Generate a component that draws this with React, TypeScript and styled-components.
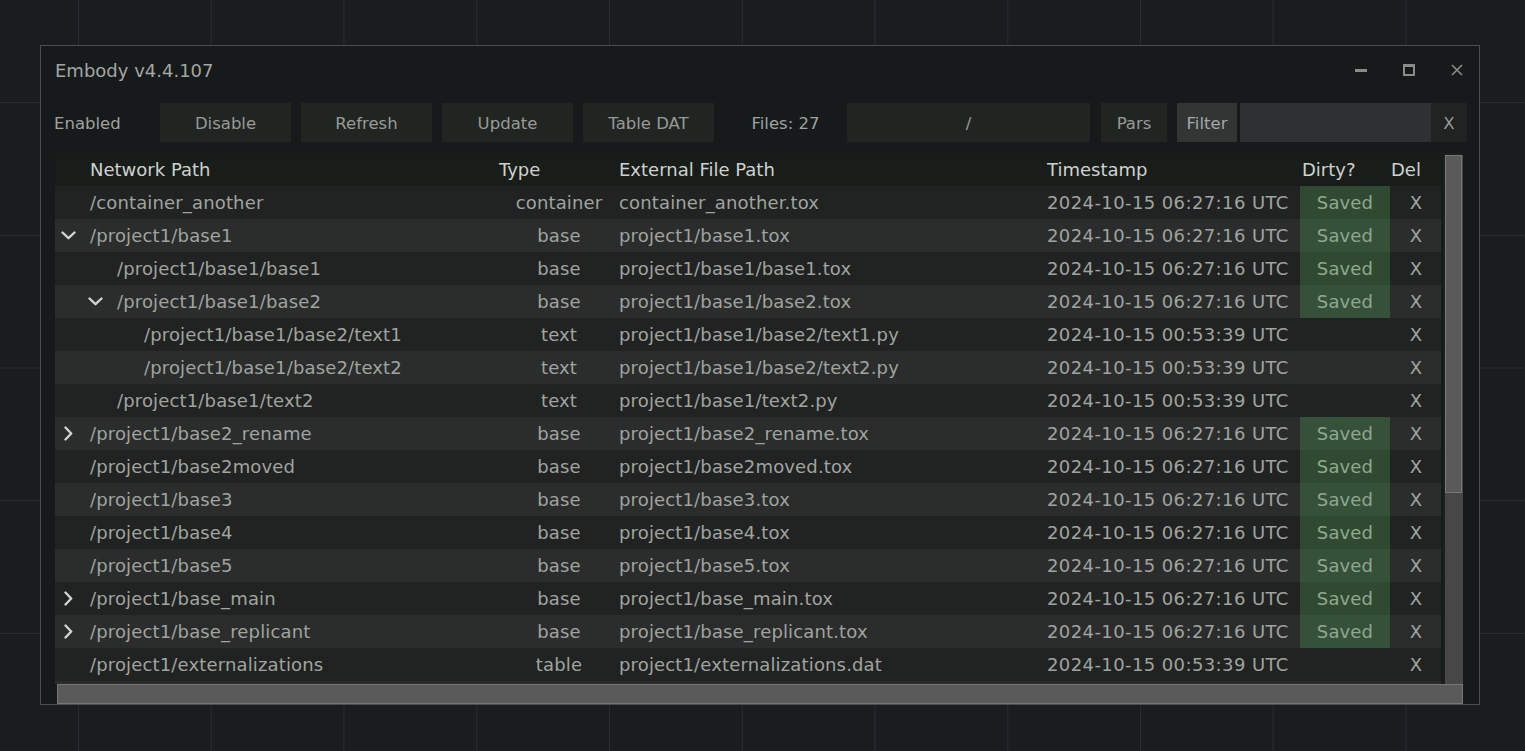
import React from "react";
import styled, { createGlobalStyle } from "styled-components";

const Global = createGlobalStyle`
  html, body { margin: 0; padding: 0; }
  body {
    width: 1525px;
    height: 751px;
    overflow: hidden;
    background-color: #1b1c20;
    background-image:
      linear-gradient(to right, #2a2b31 1px, transparent 1px),
      linear-gradient(to bottom, #2a2b31 1px, transparent 1px);
    background-size: 132.75px 132.75px;
    background-position: 78px 102px;
    font-family: "DejaVu Sans", Verdana, sans-serif;
  }
`;

const Stage = styled.div`
  padding: 45px 0 0 40px;
`;

const Window = styled.div`
  width: 1438px;
  height: 658px;
  border: 1px solid #4b4d50;
  background: #171a1a;
  display: flex;
  flex-direction: column;
`;

const TitleBar = styled.div`
  height: 48px;
  display: flex;
  align-items: center;
  padding-left: 14px;
  padding-right: 16px;
`;

const Title = styled.div`
  flex: 1;
  font-size: 18px;
  color: #a3a6a3;
`;

const WinButtons = styled.div`
  display: flex;
  align-items: center;
  gap: 36px;
  margin-top: -1px;
`;

const WinIcon = styled.svg`
  width: 12px;
  height: 12px;
  display: block;
`;

const Toolbar = styled.div`
  margin-top: 9px;
  height: 39px;
  display: flex;
  align-items: stretch;
  padding-left: 13px;
`;

const Label = styled.div<{ $w: number; $center?: boolean }>`
  width: ${(p) => p.$w}px;
  display: flex;
  align-items: center;
  justify-content: ${(p) => (p.$center ? "center" : "flex-start")};
  padding-top: 1px;
  padding-left: ${(p) => (p.$center ? 10 : 0)}px;
  box-sizing: border-box;
  font-size: 16.5px;
  color: #9fa29f;
  flex: none;
`;

const Btn = styled.div<{ $w: number; $gap?: number; $bg?: string; $fg?: string }>`
  width: ${(p) => p.$w}px;
  margin-left: ${(p) => p.$gap ?? 0}px;
  background: ${(p) => p.$bg ?? "#212522"};
  display: flex;
  align-items: center;
  justify-content: center;
  padding-top: 1px;
  font-size: 16.5px;
  color: ${(p) => p.$fg ?? "#979a97"};
  flex: none;
`;

const TableArea = styled.div`
  margin-top: 11px;
  height: 531px;
  display: flex;
  padding-left: 14px;
`;

const Table = styled.div`
  width: 1386px;
  height: 531px;
  overflow: hidden;
  background: #2a2d2b;
`;

const Row = styled.div<{ $kind: "head" | "dark" | "light" }>`
  height: 33px;
  display: flex;
  align-items: center;
  font-size: 18px;
  letter-spacing: ${(p) => (p.$kind === "head" ? "0" : "0.15px")};
  background: ${(p) =>
    p.$kind === "head" ? "#191d1a" : p.$kind === "dark" ? "#202321" : "#2a2d2b"};
  color: ${(p) => (p.$kind === "head" ? "#cfd1cf" : "#a0a3a0")};
  white-space: nowrap;
`;

const PathCell = styled.div<{ $level: number }>`
  width: 440px;
  height: 100%;
  display: flex;
  align-items: center;
  padding-left: ${(p) => 7 + p.$level * 27}px;
  box-sizing: border-box;
  flex: none;
`;

const ChevSlot = styled.div`
  width: 28px;
  height: 100%;
  display: flex;
  align-items: center;
  flex: none;
`;

const TypeCell = styled.div<{ $head?: boolean }>`
  width: 120px;
  padding-left: ${(p) => (p.$head ? 4 : 8)}px;
  box-sizing: border-box;
  text-align: ${(p) => (p.$head ? "left" : "center")};
  flex: none;
`;

const Cell = styled.div<{ $w: number; $spacing?: number }>`
  width: ${(p) => p.$w}px;
  padding-left: 4px;
  box-sizing: border-box;
  flex: none;
  ${(p) => (p.$spacing !== undefined ? `letter-spacing: ${p.$spacing}px;` : "")}
`;

const DirtyCell = styled.div<{ $saved?: boolean; $light?: boolean; $head?: boolean }>`
  width: 90px;
  height: 100%;
  display: flex;
  align-items: center;
  justify-content: ${(p) => (p.$head ? "flex-start" : "center")};
  padding-left: ${(p) => (p.$head ? 2 : 0)}px;
  box-sizing: border-box;
  flex: none;
  background: ${(p) => (p.$saved ? (p.$light ? "#35513a" : "#2f4a31") : "transparent")};
  color: ${(p) => (p.$saved ? "#8fa88f" : "inherit")};
`;

const DelCell = styled.div<{ $head?: boolean }>`
  width: 51px;
  padding-left: 1px;
  box-sizing: border-box;
  text-align: ${(p) => (p.$head ? "left" : "center")};
  flex: none;
`;

const VTrack = styled.div`
  margin-left: 2px;
  width: 20px;
  height: 531px;
  background: #464746;
  box-sizing: border-box;
  border-left: 2px solid #1c1f1f;
  border-top: 2px solid #1c1f1f;
  flex: none;
`;

const VThumb = styled.div`
  width: 17px;
  height: 338px;
  background: #5a5a5a;
  border: 1px solid #787878;
  box-sizing: border-box;
`;

const HBar = styled.div`
  margin-left: 16px;
  width: 1406px;
  height: 20px;
  background: #5a5a5a;
  border: 1px solid #767676;
  box-sizing: border-box;
`;

const ChevDown = () => (
  <svg width="15" height="9" viewBox="0 0 15 9" style={{ display: "block", marginLeft: -1 }}>
    <path d="M1.5 1.5 L7.5 7.2 L13.5 1.5" fill="none" stroke="#d2d4d2" strokeWidth="2.4" strokeLinecap="round" strokeLinejoin="round" />
  </svg>
);

const ChevRight = () => (
  <svg width="9" height="15" viewBox="0 0 9 15" style={{ display: "block", marginLeft: 2 }}>
    <path d="M1.5 1.5 L7.2 7.5 L1.5 13.5" fill="none" stroke="#d2d4d2" strokeWidth="2.4" strokeLinecap="round" strokeLinejoin="round" />
  </svg>
);

type Item = {
  path: string;
  type: string;
  file: string;
  time: string;
  saved: boolean;
  level: number;
  chev?: "down" | "right";
};

const T1 = "2024-10-15 06:27:16 UTC";
const T2 = "2024-10-15 00:53:39 UTC";

const rows: Item[] = [
  { path: "/container_another", type: "container", file: "container_another.tox", time: T1, saved: true, level: 0 },
  { path: "/project1/base1", type: "base", file: "project1/base1.tox", time: T1, saved: true, level: 0, chev: "down" },
  { path: "/project1/base1/base1", type: "base", file: "project1/base1/base1.tox", time: T1, saved: true, level: 1 },
  { path: "/project1/base1/base2", type: "base", file: "project1/base1/base2.tox", time: T1, saved: true, level: 1, chev: "down" },
  { path: "/project1/base1/base2/text1", type: "text", file: "project1/base1/base2/text1.py", time: T2, saved: false, level: 2 },
  { path: "/project1/base1/base2/text2", type: "text", file: "project1/base1/base2/text2.py", time: T2, saved: false, level: 2 },
  { path: "/project1/base1/text2", type: "text", file: "project1/base1/text2.py", time: T2, saved: false, level: 1 },
  { path: "/project1/base2_rename", type: "base", file: "project1/base2_rename.tox", time: T1, saved: true, level: 0, chev: "right" },
  { path: "/project1/base2moved", type: "base", file: "project1/base2moved.tox", time: T1, saved: true, level: 0 },
  { path: "/project1/base3", type: "base", file: "project1/base3.tox", time: T1, saved: true, level: 0 },
  { path: "/project1/base4", type: "base", file: "project1/base4.tox", time: T1, saved: true, level: 0 },
  { path: "/project1/base5", type: "base", file: "project1/base5.tox", time: T1, saved: true, level: 0 },
  { path: "/project1/base_main", type: "base", file: "project1/base_main.tox", time: T1, saved: true, level: 0, chev: "right" },
  { path: "/project1/base_replicant", type: "base", file: "project1/base_replicant.tox", time: T1, saved: true, level: 0, chev: "right" },
  { path: "/project1/externalizations", type: "table", file: "project1/externalizations.dat", time: T2, saved: false, level: 0 },
];

export default function App() {
  return (
    <>
      <Global />
      <Stage>
        <Window>
          <TitleBar>
            <Title>Embody v4.4.107</Title>
            <WinButtons>
              <WinIcon viewBox="0 0 12 12">
                <rect x="0" y="5" width="12" height="3" fill="#8a8c8a" />
              </WinIcon>
              <WinIcon viewBox="0 0 12 12">
                <rect x="1" y="1" width="10" height="10" fill="none" stroke="#8a8c8a" strokeWidth="2" />
                <rect x="0" y="0" width="12" height="3" fill="#8a8c8a" />
              </WinIcon>
              <WinIcon viewBox="0 0 12 12">
                <path d="M1 1 L11 11 M11 1 L1 11" stroke="#8a8c8a" strokeWidth="1.6" />
              </WinIcon>
            </WinButtons>
          </TitleBar>
          <Toolbar>
            <Label $w={106}>Enabled</Label>
            <Btn $w={131}>Disable</Btn>
            <Btn $w={131} $gap={10}>Refresh</Btn>
            <Btn $w={131} $gap={10}>Update</Btn>
            <Btn $w={131} $gap={10}>Table DAT</Btn>
            <Label $w={133} $center>Files: 27</Label>
            <Btn $w={243}>/</Btn>
            <Btn $w={66} $gap={11}>Pars</Btn>
            <Btn $w={60} $gap={10} $bg="#333535" $fg="#a6a8a6">Filter</Btn>
            <Btn $w={191} $gap={3} $bg="#2e3131" />
            <Btn $w={36} $bg="#202321">X</Btn>
          </Toolbar>
          <TableArea>
            <Table>
              <Row $kind="head">
                <PathCell $level={0}>
                  <ChevSlot />
                  Network Path
                </PathCell>
                <TypeCell $head>Type</TypeCell>
                <Cell $w={428}>External File Path</Cell>
                <Cell $w={257}>Timestamp</Cell>
                <DirtyCell $head>Dirty?</DirtyCell>
                <DelCell $head>Del</DelCell>
              </Row>
              {rows.map((r, i) => {
                const light = i % 2 === 1;
                return (
                  <Row key={r.path} $kind={light ? "light" : "dark"}>
                    <PathCell $level={r.level}>
                      <ChevSlot>
                        {r.chev === "down" && <ChevDown />}
                        {r.chev === "right" && <ChevRight />}
                      </ChevSlot>
                      {r.path}
                    </PathCell>
                    <TypeCell>{r.type}</TypeCell>
                    <Cell $w={428}>{r.file}</Cell>
                    <Cell $w={257} $spacing={0.4}>{r.time}</Cell>
                    <DirtyCell $saved={r.saved} $light={light}>
                      {r.saved ? "Saved" : ""}
                    </DirtyCell>
                    <DelCell>X</DelCell>
                  </Row>
                );
              })}
            </Table>
            <VTrack>
              <VThumb />
            </VTrack>
          </TableArea>
          <HBar />
        </Window>
      </Stage>
    </>
  );
}
